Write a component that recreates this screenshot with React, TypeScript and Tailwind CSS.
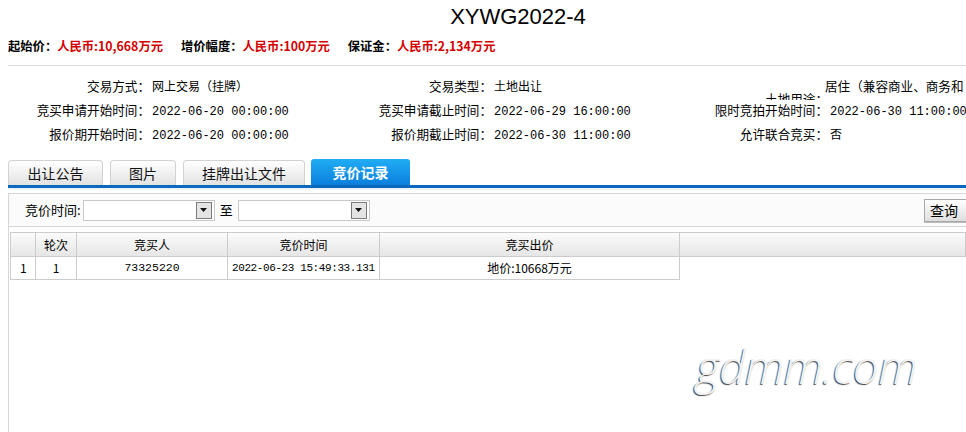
const INFO_FONT = "font-['Liberation_Mono','Noto_Sans_CJK_SC',monospace]";

const TABS = [
  { label: "出让公告", width: "w-[95px]" },
  { label: "图片", width: "w-[66px]" },
  { label: "挂牌出让文件", width: "w-[122px]" },
];

function PriceItem({ label, value }: { label: string; value: string }) {
  return (
    <span className="whitespace-nowrap">
      <span className="text-black">{label}：</span>
      <span className="text-[#d40000]">{value}</span>
    </span>
  );
}

function InfoLabel({ children }: { children: string }) {
  return <div className="text-right text-[12.6px] whitespace-nowrap">{children}：</div>;
}

function InfoValue({ children }: { children: string }) {
  return <div className="pl-[2px] whitespace-nowrap">{children}</div>;
}

function DateSelect() {
  return (
    <div className="flex h-[21px] w-[132px] items-center justify-end border border-[#c8c8c8] bg-white pr-[2px]">
      <div className="flex h-[17px] w-[16px] items-center justify-center border border-[#7a7a7a] bg-[#e4e4e4]">
        <svg width="7" height="4" viewBox="0 0 7 4">
          <path d="M0 0h7L3.5 4z" fill="#111" />
        </svg>
      </div>
    </div>
  );
}

export default function App() {
  return (
    <div className="relative h-[432px] w-[966px] overflow-hidden bg-white font-['Noto_Sans_CJK_SC','Liberation_Sans',sans-serif] text-black">
      {/* title */}
      <div className="pt-[2px] pl-[70px] text-center font-['Liberation_Sans','Noto_Sans_CJK_SC',sans-serif] text-[22px] leading-[30px]">
        XYWG2022-4
      </div>

      {/* prices */}
      <div className="mt-[4px] flex gap-[18px] pl-[8px] text-[12.3px] leading-[20px] font-bold">
        <PriceItem label="起始价" value="人民币:10,668万元" />
        <PriceItem label="增价幅度" value="人民币:100万元" />
        <PriceItem label="保证金" value="人民币:2,134万元" />
      </div>

      <div className="mt-[9px] ml-[8px] h-px bg-[#dcdcdc]" />

      {/* info grid */}
      <div
        className={`mt-[10px] ml-[8px] grid grid-cols-[142px_190px_152px_188px_148px_1fr] text-[12px] leading-[24px] ${INFO_FONT}`}
      >
        <InfoLabel>交易方式</InfoLabel>
        <InfoValue>网上交易（挂牌）</InfoValue>
        <InfoLabel>交易类型</InfoLabel>
        <InfoValue>土地出让</InfoValue>
        <div className="h-[24px] overflow-hidden pt-[13px] text-right text-[12.6px] whitespace-nowrap">土地用途：</div>
        <div className="h-[24px] overflow-hidden -ml-[3px] text-[12.6px] whitespace-nowrap">居住（兼容商业、商务和</div>

        <InfoLabel>竞买申请开始时间</InfoLabel>
        <InfoValue>2022-06-20 00:00:00</InfoValue>
        <InfoLabel>竞买申请截止时间</InfoLabel>
        <InfoValue>2022-06-29 16:00:00</InfoValue>
        <InfoLabel>限时竞拍开始时间</InfoLabel>
        <InfoValue>2022-06-30 11:00:00</InfoValue>

        <InfoLabel>报价期开始时间</InfoLabel>
        <InfoValue>2022-06-20 00:00:00</InfoValue>
        <InfoLabel>报价期截止时间</InfoLabel>
        <InfoValue>2022-06-30 11:00:00</InfoValue>
        <InfoLabel>允许联合竞买</InfoLabel>
        <InfoValue>否</InfoValue>
      </div>

      {/* tabs */}
      <div className="mt-[11px] ml-[8px]">
        <div className="flex items-end gap-[7px]">
          {TABS.map((tab) => (
            <div
              key={tab.label}
              className={`flex h-[25px] ${tab.width} items-center justify-center rounded-t-[4px] border border-b-0 border-[#d2d2d2] bg-gradient-to-b from-white to-[#e2e2e2] text-[14px] text-[#111]`}
            >
              {tab.label}
            </div>
          ))}
          <div className="-ml-[1px] flex h-[26px] w-[99px] items-center justify-center rounded-t-[3px] bg-gradient-to-b from-[#22adf5] to-[#0a7fdc] text-[14px] font-bold text-white">
            竞价记录
          </div>
        </div>
        <div className="h-[3px] bg-[#0a68bd]" />
        <div className="h-[2px] bg-[#eef3f8]" />

        {/* panel */}
        <div className="mt-[3px] border-l border-[#d6d6d6]">
          <div className="flex h-[34px] items-center border-y border-[#d6d6d6] bg-[#fbfbfb] pl-[16px] text-[13px]">
            <span className="mr-[2px]">竞价时间:</span>
            <DateSelect />
            <span className="mx-[5px]">至</span>
            <DateSelect />
            <div className="ml-auto -mr-[4px] flex h-[23px] w-[46px] items-center justify-center border border-[#a9a9a9] bg-gradient-to-b from-white to-[#dedede] pr-[6px] text-[14px] shadow-[0_1px_0_#bbb]">
              查询
            </div>
          </div>

          {/* table */}
          <div className="h-[210px] pt-[5px] pl-px">
            <div className="grid grid-cols-[26px_41px_151px_152px_300px_1fr] text-[12px]">
              {["", "轮次", "竞买人", "竞价时间", "竞买出价", ""].map((h, i) => (
                <div
                  key={i}
                  className="flex h-[25px] items-center justify-center border-t border-r border-b border-[#cccccc] bg-gradient-to-b from-[#fbfbfb] to-[#e6e6e6] first:border-l"
                >
                  {h}
                </div>
              ))}
              <div className="flex h-[23px] items-center border-r border-b border-l border-[#cccccc] pl-[9px]">1</div>
              <div className="flex h-[23px] items-center justify-center border-r border-b border-[#cccccc]">1</div>
              <div className="flex h-[23px] items-center justify-center border-r border-b border-[#cccccc] font-['Liberation_Mono',monospace] text-[11.5px]">
                73325220
              </div>
              <div className="flex h-[23px] items-center overflow-hidden border-r border-b border-[#cccccc] pl-[4px] font-['Liberation_Mono',monospace] text-[11px] tracking-[-0.4px] whitespace-nowrap">
                2022-06-23 15:49:33.131
              </div>
              <div className="flex h-[23px] items-center justify-center border-r border-b border-[#cccccc]">
                地价:10668万元
              </div>
              <div />
            </div>
          </div>
        </div>
      </div>

      {/* watermark */}
      <div className="pointer-events-none absolute top-[336px] left-[696px] font-['Open_Sans',sans-serif] text-[46px] leading-[60px] font-light italic tracking-[-0.5px] text-[#f2f2f2] [text-shadow:-1px_1px_1px_#444]">
        gdmm.com
      </div>
    </div>
  );
}
